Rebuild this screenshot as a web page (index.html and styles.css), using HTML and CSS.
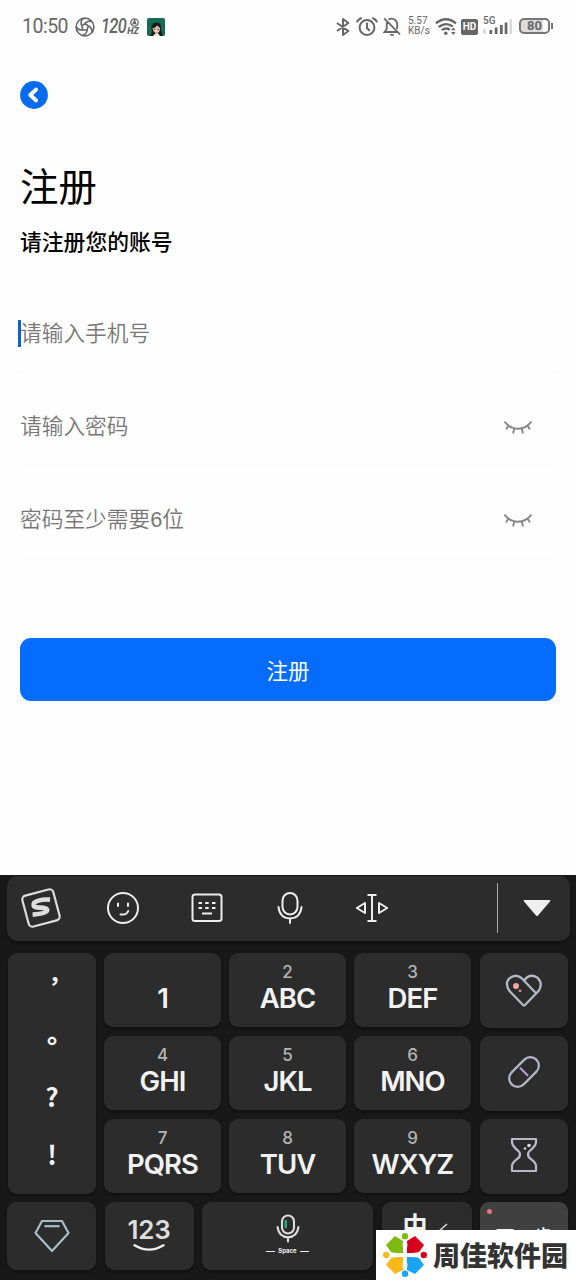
FILE: index.html
```html
<!DOCTYPE html>
<html lang="zh-CN">
<head>
<meta charset="utf-8">
<meta name="viewport" content="width=device-width, initial-scale=1">
<title>注册</title>
<link rel="stylesheet" href="styles.css">
</head>
<body>
<div class="screen">
  <header class="status">
    <span class="time">10:50</span>
    <svg class="ic-shutter" width="20" height="20" viewBox="0 0 20 20" fill="none" stroke="#666" stroke-width="1.6"><circle cx="10" cy="10" r="8.9"/><path d="M10 6.5Q13 3 17 4.6M13.2 8.8Q17.5 11 17 15.5M12.2 13Q11.5 17.5 7 18.5M7.8 13Q3.2 13.5 1.2 10M6.8 8.8Q5 4.5 8 1.3"/><path d="M10 6.5L13.2 8.8L12.2 13H7.8L6.8 8.8Z"/></svg>
    <span class="rate">120</span>
    <span class="rate-unit"><svg width="9" height="9" viewBox="0 0 9 9" fill="none" stroke="#666" stroke-width="1.3"><circle cx="4.5" cy="4.5" r="3.7"/><path d="M2.8 6.5L4.5 2.5L6.2 6.5M3.2 5.3H6"/></svg><b>HZ</b></span>
    <svg class="ic-avatar" width="18" height="18" viewBox="0 0 18 18"><rect width="18" height="18" rx="2" fill="#176b55"/><path d="M3 18Q6 15 4.5 10Q4 4.5 9.3 4.5Q14.5 4.5 14 10Q14 14 16 18Z" fill="#171d1b"/><path d="M5.5 10Q9 10 10 7.5L13 10Q13 15 9.5 15Q6 14.5 5.5 10Z" fill="#f2c9b4"/><path d="M6 18L8.3 15.2H11L13 18Z" fill="#f5e5de"/><path d="M6.5 11.2H8.3M10.3 11.2H12" stroke="#333"/></svg>
    <div class="status-right">
      <svg width="14" height="18" viewBox="0 0 14 18" fill="none" stroke="#666" stroke-width="2" stroke-linejoin="round"><path d="M1 5L12.4 13L7 17V1L12.4 5L1 13"/></svg>
      <svg class="ic-alarm" width="22" height="19" viewBox="0 0 22 19" fill="none" stroke="#666" stroke-width="2" stroke-linecap="round"><circle cx="11" cy="10.5" r="7.4"/><path d="M1.2 4.5Q2.5 2.2 5 1.2M20.8 4.5Q19.5 2.2 17 1.2M11 6.5V11L13.2 13.2"/></svg>
      <svg class="ic-bell" width="18" height="19" viewBox="0 0 18 19" fill="none" stroke="#666" stroke-width="1.8"><path d="M1.2 1.4L17 17.4M5.5 2.6Q9 .4 12.3 3Q14.2 4.8 14.2 8V12M3.7 5.5V12L1.5 15H14.2M7.2 17.8H10.8"/></svg>
      <span class="speed"><i>5.57</i><i>KB/s</i></span>
      <svg class="ic-wifi" width="22" height="18" viewBox="0 0 22 18" fill="none" stroke="#666" stroke-width="2.3"><path d="M.9 5.4Q11-2.8 21 5.4M3.7 9Q11 3.4 17.7 8.5M6.8 12.2Q11 9 14.7 11.7"/><circle cx="10.8" cy="15.2" r="1.8" fill="#666" stroke="none"/><path d="M16 12.3L18.3 9.5L20.6 12.3ZM16 14L18.3 17L20.6 14Z" fill="#666" stroke="none"/></svg>
      <span class="hd">HD</span>
      <span class="signal"><em>5G</em><svg width="30" height="17" viewBox="0 0 30 17"><path d="M0 11H3V16H0Z" fill="#ddd"/><path d="M6.5 12H9.2V16H6.5ZM11.8 9.5H14.5V16H11.8ZM17 7H19.7V16H17ZM21.7 4.5H24.4V16H21.7Z" fill="#666"/><path d="M26.5 1H29V16H26.5Z" fill="#d8d8d8"/></svg></span>
      <span class="battery">80</span>
    </div>
  </header>

  <main class="page">
    <svg class="back" width="28" height="28" viewBox="0 0 28 28"><circle cx="14" cy="14" r="13.9" fill="#066bed"/><path d="M16.2 8.5L10.2 14L16.2 19.5" fill="none" stroke="#fff" stroke-width="3.8" stroke-linecap="round" stroke-linejoin="round"/></svg>
    <h1 class="title">注册</h1>
    <p class="subtitle">请注册您的账号</p>
    <form class="form">
      <div class="field field-active"><span>请输入手机号</span></div>
      <div class="field"><span>请输入密码</span>
        <svg width="28" height="15" viewBox="0 0 28 15" fill="none" stroke="#888" stroke-width="1.9" stroke-linecap="round"><path d="M1 2.2Q6 8.7 14 8.7T27 2.2M4.4 5.5L2.5 8.7M10.3 8.5L9.2 12.7M17.7 8.5L18.8 12.7M23.6 5.5L25.5 8.7"/></svg></div>
      <div class="field"><span>密码至少需要6位</span>
        <svg width="28" height="15" viewBox="0 0 28 15" fill="none" stroke="#888" stroke-width="1.9" stroke-linecap="round"><path d="M1 2.2Q6 8.7 14 8.7T27 2.2M4.4 5.5L2.5 8.7M10.3 8.5L9.2 12.7M17.7 8.5L18.8 12.7M23.6 5.5L25.5 8.7"/></svg></div>
      <button class="submit" type="button">注册</button>
    </form>
  </main>

  <section class="keyboard">
    <div class="toolbar">
      <svg width="42" height="42" viewBox="0 0 42 42" fill="none"><rect x="5" y="5" width="32" height="32" rx="4" transform="rotate(-15 21 21)" stroke="#ddd" stroke-width="2.2"/><path d="M30 12.6Q24 12 18.5 13.6Q12.5 15.3 13.6 18.6Q14.6 20.6 20 20.6Q27.5 20.6 27.2 23.4Q26.5 26.8 12.6 27.6" stroke="#ddd" stroke-width="4.6"/></svg>
      <svg width="34" height="34" viewBox="0 0 34 34" fill="none" stroke="#eee" stroke-width="2" stroke-linecap="round"><circle cx="17" cy="17" r="15"/><path d="M12 12.5V15M22 12.5V15M14.5 23.4Q20.5 24.5 22.2 20"/></svg>
      <svg width="32" height="30" viewBox="0 0 32 30" fill="none" stroke="#eee" stroke-width="2"><rect x="1.5" y="1.5" width="29" height="26.5" rx="2.5"/><path d="M7.5 10H11M14.2 10H17.7M21 10H24.5M7.5 15H11M14.2 15H17.7M21 15H24.5M11 20.5H21"/></svg>
      <svg width="26" height="34" viewBox="0 0 26 34" fill="none" stroke="#eee" stroke-width="2" stroke-linecap="round"><rect x="5.5" y="2" width="15" height="21.5" rx="7.5"/><path d="M1.5 16Q2.5 27 13 27.5Q23.5 27 24.5 16M13 27.5V32"/></svg>
      <svg width="34" height="30" viewBox="0 0 34 30" fill="none" stroke="#eee" stroke-width="2"><path d="M12.5 2H21.5M17 2V28M12.5 28H21.5M10 10L1.8 15L10 20ZM24 10L32.2 15L24 20Z" stroke-linejoin="round"/></svg>
      <span class="divider"></span>
      <svg width="28" height="18" viewBox="0 0 28 18"><path d="M1.5 1H26.5Q28 1 27 2.5L15 16.5Q14 17.5 13 16.5L1 2.5Q0 1 1.5 1Z" fill="#eee"/></svg>
    </div>

    <div class="keys">
      <div class="key symbols"><span>，</span><span>。</span><span>?</span><span>!</span></div>
      <div class="key single"><b>1</b></div>
      <div class="key"><small>2</small><b>ABC</b></div>
      <div class="key"><small>3</small><b>DEF</b></div>
      <div class="key icon"><svg width="38" height="34" viewBox="0 0 38 34" fill="none" stroke="#b3bac5" stroke-width="2.3" stroke-linejoin="round"><path d="M19 32L4.5 17Q-.2 10 3.7 5Q10-1 16.5 4L30.8 19M19 6.5Q25-1.2 32.3 3.6Q38.5 9.5 33.5 17L19 32"/><circle cx="11" cy="12" r="3" fill="#f4a6a1" stroke="none"/><circle cx="15" cy="16.8" r="1.4" fill="#e88c89" stroke="none"/></svg></div>
      <div class="key"><small>4</small><b>GHI</b></div>
      <div class="key"><small>5</small><b>JKL</b></div>
      <div class="key"><small>6</small><b>MNO</b></div>
      <div class="key icon pill"><svg width="34" height="34" viewBox="0 0 34 34" fill="none" stroke="#b4b8c6" stroke-width="2.2"><rect x="8.5" y="-.5" width="17" height="35" rx="8.5" transform="rotate(45 17 17)"/><path d="M13 12.7L21 20.7" stroke="#b4a1dc"/></svg></div>
      <div class="key"><small>7</small><b>PQRS</b></div>
      <div class="key"><small>8</small><b>TUV</b></div>
      <div class="key"><small>9</small><b>WXYZ</b></div>
      <div class="key icon hourglass"><svg width="28" height="36" viewBox="0 0 28 36" fill="none" stroke="#b8b8ca" stroke-width="2.2" stroke-linejoin="round"><path d="M2 2H26V5.5Q25.5 9.5 19 14.5Q17 17.5 19 20.5Q26 25.5 26 29V34H2V29Q2 25.5 9 20.5Q11 17.5 9 14.5Q2.5 9.5 2 5.5Z"/><circle cx="19" cy="8.5" r="1.8" fill="#ddd" stroke="none"/><circle cx="15" cy="11.5" r="1.2" fill="#ddd" stroke="none"/></svg></div>
    </div>

    <div class="bottom-row">
      <div class="key icon"><svg width="36" height="34" viewBox="0 0 36 34" fill="none" stroke="#a8bec4" stroke-width="2.2" stroke-linejoin="round"><path d="M8 2H28L34.5 14L18 32L1.5 14Z"/><path d="M10.5 7.2H25.5"/></svg></div>
      <div class="key numeric"><b>123</b><svg width="34" height="10" viewBox="0 0 34 10" fill="none" stroke="#eee" stroke-width="2.4" stroke-linecap="round"><path d="M2.5 2.2Q17 11 31.5 2.2"/></svg></div>
      <div class="key space"><svg width="24" height="29" viewBox="0 0 24 29" fill="none" stroke="#ddd" stroke-width="2.1" stroke-linecap="round"><rect x="6" y="1.5" width="12" height="18" rx="6"/><path d="M1.5 13Q3 23 12 23.2Q21 23 22.5 13M12 23.2V27.5"/><path d="M9.7 7V13" stroke="#24ad83" stroke-width="2.5"/></svg><span class="space-label">Space</span></div>
      <div class="key lang"><b>中</b><svg width="12" height="12" viewBox="0 0 12 12"><path d="M10 1L1 9" stroke="#ddd" stroke-width="1.5"/></svg></div>
      <div class="key enter">下一步</div>
    </div>
  </section>

  <aside class="brand">
    <svg width="44" height="44" viewBox="0 0 44 44"><path d="M3 12L12 3L20 8Q21 15 20 20Q12 21 8 19Z" fill="#7fba13"/><path d="M32 3L41 12L36 19Q30 21 24 20Q23 12 24 8Z" fill="#d6001c"/><path d="M8 25Q13 23 20 24Q21 32 20 37L12 41L3 32Z" fill="#f8b91a"/><path d="M24 24Q32 23 36 25L41 32L32 41L24 37Q23 30 24 24Z" fill="#19a5f5"/><path d="M20 15Q18.5 8 22 8Q25.500 8 24 15L23.500 20.500L29 20Q37 19 37 22Q37 25 29 24L23.500 23.500L24 29Q25.500 36 22 36Q18.500 36 20 29L20.500 23.500L15 24Q7 25 7 22Q7 19 15 20L20.500 20.500Z" fill="#fff"/><circle cx="22" cy="3.2" r="3.2" fill="#7fba13"/><circle cx="40.8" cy="22" r="3.2" fill="#d6001c"/><circle cx="22" cy="40.8" r="3.2" fill="#19a5f5"/><circle cx="3.2" cy="22" r="3.2" fill="#f8b91a"/></svg>
    <span>周佳软件园</span>
  </aside>
</div>
</body>
</html>
```
FILE: styles.css
```css
* { box-sizing: border-box; }

body {
  margin: 0;
  background: #fff;
  font-family: Roboto, "Noto Sans CJK SC", sans-serif;
}

.screen {
  position: relative;
  display: flex;
  flex-direction: column;
  width: 576px;
  height: 1280px;
  overflow: hidden;
  background: #fefefe;
}

/* Status bar */
.status {
  display: flex;
  align-items: center;
  height: 53px;
  padding: 0 26px 0 22px;
  color: #666;
}
.status svg { display: block; flex: none; }
.time { width: 53px; font-size: 19.5px; font-weight: 400; line-height: 24px; letter-spacing: -.5px; }
.rate {
  width: 26px;
  margin-left: 6px;
  font: italic 500 19.5px/24px Roboto, sans-serif;
  letter-spacing: -.8px;
  transform: scaleX(.84);
  transform-origin: left;
}
.rate-unit { display: flex; flex-direction: column; align-items: center; width: 12px; }
.rate-unit svg { margin-left: 3px; }
.rate-unit b { font: italic 800 9px/9px Roboto, sans-serif; }
.ic-avatar { margin-left: 8px; }
.status-right { display: flex; align-items: center; margin-left: auto; }
.ic-alarm { margin-left: 6px; }
.ic-bell { margin-left: 5px; }
.speed { display: flex; flex-direction: column; width: 23px; margin: -2px 0 0 7px; }
.speed i { font: normal 400 10px/10px Roboto, sans-serif; white-space: nowrap; }
.ic-wifi { margin-left: 4px; }
.hd {
  width: 17px;
  height: 16px;
  margin-left: 4px;
  border-radius: 2px;
  background: #666;
  color: #fff;
  font: 700 10px/16px Roboto, sans-serif;
  text-align: center;
}
.signal { position: relative; width: 30px; margin-left: 5px; }
.signal em { position: absolute; left: 0; top: -2px; font: normal 500 10px/10px Roboto, sans-serif; }
.battery {
  position: relative;
  width: 31px;
  height: 16px;
  margin: -2px 0 0 6px;
  border: 2px solid #777;
  border-radius: 5px;
  background: linear-gradient(90deg, #ddd 80%, #fff 80%);
  font: 700 13px/12px Roboto, sans-serif;
  text-align: center;
}
.battery::after {
  content: "";
  position: absolute;
  right: -5px;
  top: 3px;
  width: 2px;
  height: 6px;
  background: #777;
}

/* Registration form */
.page { flex: 1; padding: 28px 20px 0; }
.back { display: block; margin-left: -.5px; }
.title { margin: 51px 0 0; font-size: 38.4px; font-weight: 400; line-height: 56px; color: #000; }
.subtitle { margin: 11px 0 0; font-size: 21.8px; font-weight: 500; line-height: 32px; color: #000; }
.form { display: flex; flex-direction: column; margin-top: 21px; }
.field {
  display: flex;
  align-items: center;
  justify-content: space-between;
  height: 93px;
  padding: 16px 24px 0 0;
  border-bottom: 1px solid #f9f9f9;
  color: #777;
  font-family: "Liberation Sans", "Noto Sans CJK SC DemiLight", "Noto Sans CJK SC", sans-serif;
  font-size: 21.7px;
  font-weight: 350;
  line-height: 32px;
}
.field-active { position: relative; }
.field-active::before {
  content: "";
  position: absolute;
  left: -2px;
  top: 40px;
  width: 3px;
  height: 27px;
  background: #0a62d0;
}
.submit {
  height: 63px;
  margin-top: 79px;
  padding: 0;
  border: 0;
  border-radius: 11px;
  background: #056cfe;
  color: #fff;
  font: 400 21.6px/61px "Noto Sans CJK SC", sans-serif;
}

/* Keyboard */
.keyboard {
  display: flex;
  flex-direction: column;
  flex: none;
  height: 405px;
  padding: 1px 6px 10px 7px;
  background: #181818;
}
.toolbar {
  display: flex;
  align-items: center;
  height: 65px;
  padding: 0 19px 2px 13px;
  border-radius: 10px;
  background: #2c2c2c;
  box-shadow: 0 2px 2px #101010;
}
.toolbar svg:nth-child(2) { margin-left: 44px; }
.toolbar svg:nth-child(3) { margin-left: 51px; }
.toolbar svg:nth-child(4) { margin-left: 54px; }
.toolbar svg:nth-child(5) { margin-left: 52px; }
.divider { width: 1.5px; height: 50px; margin: 0 25px 0 auto; background: #aaa; }

.keys {
  display: grid;
  grid-template-columns: 88px 117px 117px 117px 88px;
  grid-template-rows: repeat(3, 74px);
  gap: 9px 8px;
  margin: 12px 0 0 1px;
}
.keys .icon { margin: 0 -1px 0 1px; height: 75px; }
.key {
  display: flex;
  flex-direction: column;
  align-items: center;
  border-radius: 9px;
  background: #2c2c2c;
  box-shadow: 0 2px 2px #111;
  color: #f2f2f2;
  font-family: Inter, sans-serif;
}
.key small { margin-top: 10px; font-size: 17px; font-weight: 500; line-height: 18px; color: #b5b5b5; }
.key b { font-size: 27.5px; font-weight: 600; line-height: 34px; letter-spacing: -.9px; }
.single b { margin-top: 28px; }
.icon { justify-content: center; }
.pill svg, .hourglass svg { margin-top: -3px; }
.symbols { grid-row: span 3; height: 241px; }
.symbols span {
  width: 28px;
  height: 58px;
  font: 700 26px/54px "Noto Sans CJK SC", sans-serif;
  text-align: center;
}
.symbols span:nth-child(1) { font-size: 23px; transform: translate(8px, -8px); }
.symbols span:nth-child(2) { font-weight: 900; transform: translate(8px, -6px); }

.bottom-row {
  display: grid;
  grid-template-columns: 89px 89px 171px 90px 88px;
  column-gap: 8.5px;
  height: 68px;
  margin-top: 9px;
}
.numeric b { margin-top: 12px; height: 29px; font-size: 26px; line-height: 32px; color: #ddd; letter-spacing: -.2px; }
.space { padding-top: 12px; }
.space-label { display: flex; align-items: center; gap: 3px; margin-top: 4px; font: 700 6px/8px Inter, sans-serif; }
.space-label::before, .space-label::after { content: ""; width: 9px; height: 1px; background: #eee; }
.lang { flex-direction: row; align-items: flex-start; padding-left: 21px; }
.lang b { font: 700 25px/32px "Noto Sans CJK SC", sans-serif; margin-top: 6px; }
.lang svg { margin: 21px 0 0 10px; }
.enter {
  position: relative;
  padding-top: 20px;
  background: #404040;
  font: 500 19px/28px "Noto Sans CJK SC", sans-serif;
}
.enter::before {
  content: "";
  position: absolute;
  left: 7px;
  top: 7px;
  width: 5px;
  height: 5px;
  border-radius: 50%;
  background: #e27b80;
}

/* Corner badge over the keyboard */
.brand {
  position: absolute;
  right: 0;
  bottom: 0;
  display: flex;
  align-items: center;
  width: 200px;
  height: 50px;
  padding-left: 7px;
  background: #fff;
  color: #333;
  font: 900 27px/48px "Noto Sans CJK SC", sans-serif;
  white-space: nowrap;
}
.brand svg { flex: none; }
.brand span { margin-left: 6px; }
```
